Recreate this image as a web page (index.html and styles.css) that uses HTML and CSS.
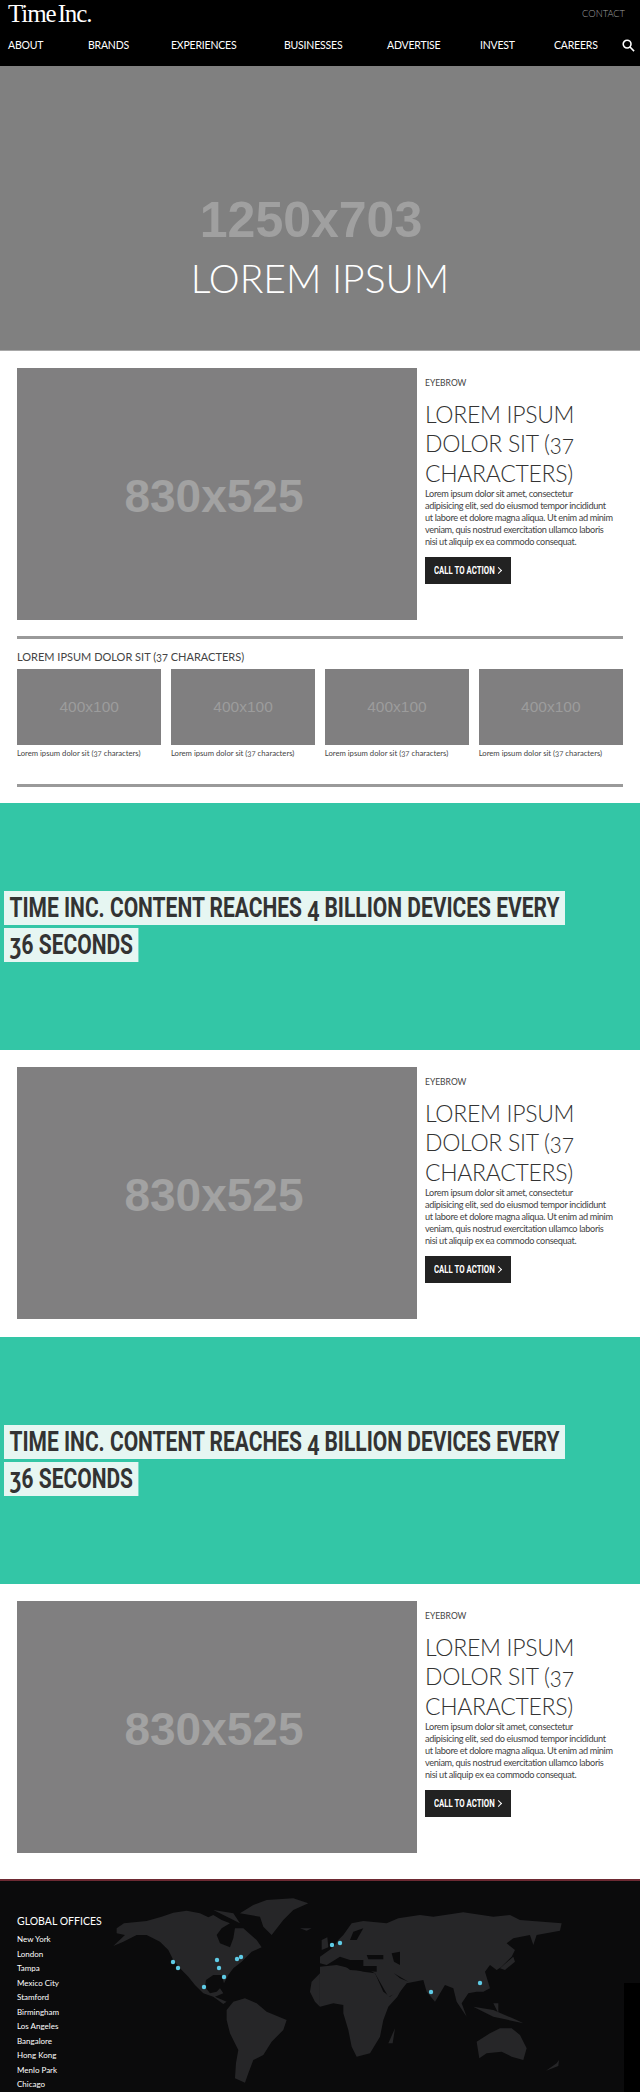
FILE: index.html
```html
<!DOCTYPE html>
<html lang="en">
<head>
    <meta charset="UTF-8">
    <meta name="viewport" content="width=device-width, initial-scale=1.0">
    <title>Time Inc.</title>
    <link rel="stylesheet" href="styles.css">
</head>
<body>
    <header class="site-header">
        <div class="top-bar">
            <a class="logo">Time Inc.</a>
            <a class="contact">CONTACT</a>
        </div>
        <nav class="main-nav">
            <a>ABOUT</a>
            <a>BRANDS</a>
            <a>EXPERIENCES</a>
            <a>BUSINESSES</a>
            <a>ADVERTISE</a>
            <a>INVEST</a>
            <a>CAREERS</a>
            <svg class="search-icon" viewBox="0 0 14 14">
                <circle cx="5.5" cy="5.5" r="4.2"/>
                <path d="M8.6 8.6 L13 13"/>
            </svg>
        </nav>
    </header>

    <section class="hero">
        <div class="hero-size">1250x703</div>
        <h1 class="hero-title">LOREM IPSUM</h1>
    </section>

    <section class="block">
        <div class="feature">
            <div class="placeholder feature-image">830x525</div>
            <div class="feature-copy">
                <div class="eyebrow">EYEBROW</div>
                <h2>LOREM IPSUM DOLOR SIT (37 CHARACTERS)</h2>
                <p>Lorem ipsum dolor sit amet, consectetur<br>adipisicing elit, sed do eiusmod tempor incididunt<br>ut labore et dolore magna aliqua. Ut enim ad minim<br>veniam, quis nostrud exercitation ullamco laboris<br>nisi ut aliquip ex ea commodo consequat.</p>
                <a class="cta"><span class="cta-label">CALL TO ACTION</span><span class="chevron"></span></a>
            </div>
        </div>
        <div class="rule-block">
            <h3>LOREM IPSUM DOLOR SIT (37 CHARACTERS)</h3>
            <div class="thumbs">
                <div class="thumb"><div class="placeholder thumb-image">400x100</div><span>Lorem ipsum dolor sit (37 characters)</span></div>
                <div class="thumb"><div class="placeholder thumb-image">400x100</div><span>Lorem ipsum dolor sit (37 characters)</span></div>
                <div class="thumb"><div class="placeholder thumb-image">400x100</div><span>Lorem ipsum dolor sit (37 characters)</span></div>
                <div class="thumb"><div class="placeholder thumb-image">400x100</div><span>Lorem ipsum dolor sit (37 characters)</span></div>
            </div>
        </div>
        <div class="rule-end"></div>
    </section>

    <section class="stat">
        <div class="stat-line">TIME INC. CONTENT REACHES 4 BILLION DEVICES EVERY</div>
        <div class="stat-line">36 SECONDS</div>
    </section>

    <section class="block">
        <div class="feature">
            <div class="placeholder feature-image">830x525</div>
            <div class="feature-copy">
                <div class="eyebrow">EYEBROW</div>
                <h2>LOREM IPSUM DOLOR SIT (37 CHARACTERS)</h2>
                <p>Lorem ipsum dolor sit amet, consectetur<br>adipisicing elit, sed do eiusmod tempor incididunt<br>ut labore et dolore magna aliqua. Ut enim ad minim<br>veniam, quis nostrud exercitation ullamco laboris<br>nisi ut aliquip ex ea commodo consequat.</p>
                <a class="cta"><span class="cta-label">CALL TO ACTION</span><span class="chevron"></span></a>
            </div>
        </div>
    </section>

    <section class="stat">
        <div class="stat-line">TIME INC. CONTENT REACHES 4 BILLION DEVICES EVERY</div>
        <div class="stat-line">36 SECONDS</div>
    </section>

    <section class="block block-last">
        <div class="feature">
            <div class="placeholder feature-image">830x525</div>
            <div class="feature-copy">
                <div class="eyebrow">EYEBROW</div>
                <h2>LOREM IPSUM DOLOR SIT (37 CHARACTERS)</h2>
                <p>Lorem ipsum dolor sit amet, consectetur<br>adipisicing elit, sed do eiusmod tempor incididunt<br>ut labore et dolore magna aliqua. Ut enim ad minim<br>veniam, quis nostrud exercitation ullamco laboris<br>nisi ut aliquip ex ea commodo consequat.</p>
                <a class="cta"><span class="cta-label">CALL TO ACTION</span><span class="chevron"></span></a>
            </div>
        </div>
    </section>

    <footer class="offices">
        <svg class="world-map" viewBox="0 1881 640 211">
            <g class="land" transform="translate(0 1860) scale(0.3333)">
                <!-- north america -->
                <path d="M350 205 L372 190 L440 183 L485 170 L520 158 L560 152 L600 160 L625 172 L640 165 L665 180 L690 190 L665 205 L650 225 L660 250 L690 262 L700 235 L705 205 L730 205 L770 240 L785 262 L755 275 L740 290 L725 305 L700 325 L685 345 L672 370 L665 345 L640 345 L618 360 L615 380 L630 400 L650 395 L660 385 L670 400 L645 410 L680 425 L670 432 L640 410 L610 400 L585 375 L565 350 L540 325 L520 300 L505 270 L480 245 L440 225 L410 225 L370 245 L340 258 L375 225 L350 220 Z"/>
                <path d="M640 150 L700 160 L720 190 L690 175 Z"/>
                <!-- greenland -->
                <path d="M720 160 L760 135 L800 120 L880 115 L925 130 L880 150 L850 180 L815 225 L790 200 L780 170 Z"/>
                <path d="M900 205 L935 205 L920 212 Z"/>
                <!-- south america -->
                <path d="M680 450 L700 425 L735 415 L770 430 L800 455 L860 480 L850 510 L815 545 L790 585 L760 600 L745 640 L735 668 L705 655 L708 610 L715 570 L690 520 L680 480 Z"/>
                <!-- west africa -->
                <path d="M960 340 L935 365 L930 395 L945 425 L960 440 Z"/>
            </g>
            <g class="land" transform="translate(320 1860) scale(0.3333)">
                <!-- africa -->
                <path d="M0 320 L50 315 L90 325 L130 335 L165 340 L190 395 L210 410 L250 378 L232 410 L205 440 L190 480 L180 530 L150 580 L110 590 L95 560 L85 510 L70 460 L70 435 L40 430 L0 440 Z"/>
                <!-- eurasia -->
                <path d="M0 290 L40 262 L55 240 L70 225 L95 190 L130 183 L200 190 L235 175 L300 165 L340 170 L430 157 L520 170 L570 165 L600 180 L725 190 L720 212 L650 225 L640 255 L630 225 L580 235 L560 250 L585 270 L575 290 L545 320 L530 330 L510 315 L495 335 L510 385 L490 395 L470 395 L445 400 L425 430 L440 470 L410 425 L400 385 L375 375 L345 425 L320 395 L310 360 L260 370 L240 395 L205 410 L165 340 L130 320 L130 300 L90 300 L60 290 L20 315 L0 310 Z"/>
                <path d="M5 240 L22 232 L25 262 L5 270 Z"/>
                <!-- japan, islands -->
                <path d="M540 325 L580 290 L585 305 L555 330 Z"/>
                <path d="M460 440 L520 470 L610 490 L590 480 L520 450 Z"/>
                <path d="M520 430 L535 430 L535 460 Z"/>
                <!-- australia -->
                <path d="M470 545 L510 520 L540 505 L575 505 L600 525 L620 565 L610 600 L575 590 L545 575 L500 580 L478 595 Z"/>
                <path d="M205 550 L225 505 L218 550 Z"/>
                <path d="M678 632 L710 610 L717 600 L715 618 Z"/>
            </g>
            <g class="water" transform="translate(320 1860) scale(0.3333)">
                <path d="M140 285 L190 285 L190 298 L145 298 Z"/>
                <path d="M215 280 L240 275 L240 315 L222 305 Z"/>
                <path d="M100 215 L130 205 L110 240 L90 240 Z"/>
                <path d="M222 340 L265 365 L240 355 Z"/>
                <path d="M75 318 L170 318 L170 335 L90 330 Z"/>
            </g>
            <g class="pins">
                <circle cx="173" cy="1962" r="2.2"/>
                <circle cx="178" cy="1968" r="2.2"/>
                <circle cx="204" cy="1987" r="2.2"/>
                <circle cx="217" cy="1960" r="2.2"/>
                <circle cx="219" cy="1968" r="2.2"/>
                <circle cx="224" cy="1977" r="2.2"/>
                <circle cx="237" cy="1959" r="2.2"/>
                <circle cx="241" cy="1957" r="2.2"/>
                <circle cx="332" cy="1945" r="2.2"/>
                <circle cx="340" cy="1943" r="2.2"/>
                <circle cx="431" cy="1992" r="2.2"/>
                <circle cx="480" cy="1983" r="2.2"/>
            </g>
        </svg>
        <div class="corner-box"></div>
        <h4>GLOBAL OFFICES</h4>
        <ul>
            <li>New York</li>
            <li>London</li>
            <li>Tampa</li>
            <li>Mexico City</li>
            <li>Stamford</li>
            <li>Birmingham</li>
            <li>Los Angeles</li>
            <li>Bangalore</li>
            <li>Hong Kong</li>
            <li>Menlo Park</li>
            <li>Chicago</li>
        </ul>
    </footer>
</body>
</html>
```

FILE: styles.css
```css
* {
    box-sizing: border-box;
}
html, body {
    height: 2092px;
    overflow: hidden;
}
body {
    margin: 0;
    font-family: Lato, 'Open Sans', sans-serif;
    font-variant-numeric: oldstyle-nums;
    background-color: white;
    color: #444;
}

/* header */
.site-header {
    height: 66px;
    background-color: black;
    color: white;
}
.top-bar {
    height: 33px;
    display: flex;
    justify-content: space-between;
    padding: 0 15px 0 8px;
}
.logo {
    font-family: 'Liberation Serif', serif;
    font-size: 25px;
    letter-spacing: -1.1px;
    word-spacing: -3px;
    line-height: 27px;
}
.contact {
    font-size: 9.3px;
    font-weight: 300;
    color: #a0a0a0;
    line-height: 27px;
}
.main-nav {
    display: grid;
    grid-template-columns: 80px 83px 113px 103px 93px 74px 67px 13px;
    align-items: center;
    padding: 0 0 0 8px;
    height: 24px;
    font-size: 10.5px;
    letter-spacing: -0.2px;
}
.search-icon {
    width: 13px;
    height: 13px;
    margin-left: 1px;
    fill: none;
    stroke: white;
    stroke-width: 1.7;
}

/* hero */
.hero {
    height: 285px;
    background-color: #808080;
    border-bottom: 1px solid #a8a8a8;
    text-align: center;
    padding-top: 129px;
}
.hero-size {
    font-family: 'Liberation Sans', sans-serif;
    font-weight: bold;
    font-size: 50px;
    line-height: 50px;
    color: #a0a0a0;
    padding-right: 18px;
}
.hero-title {
    margin: 8px 0 0 0;
    font-size: 39px;
    font-weight: 300;
    line-height: 50px;
    color: white;
}

/* feature rows */
.block {
    padding: 17px 17px 2px 17px;
}
.block-last {
    height: 295px;
}
.feature {
    display: flex;
    gap: 8px;
    height: 252px;
    margin-bottom: 16px;
}
.placeholder {
    display: flex;
    align-items: center;
    justify-content: center;
    background-color: #807f80;
    color: #a2a2a2;
    font-family: 'Liberation Sans', sans-serif;
    font-variant-numeric: normal;
}
.feature-image {
    flex: none;
    width: 400px;
    font-size: 46px;
    font-weight: bold;
    padding: 3px 6px 0 0;
}
.feature-copy {
    flex: 1;
    padding-top: 9px;
}
.eyebrow {
    font-size: 8.5px;
    line-height: 12px;
}
h2 {
    margin: 11px 0 0 0;
    font-size: 23px;
    font-weight: 300;
    letter-spacing: -0.3px;
    line-height: 29.3px;
    color: #333;
}
.feature-copy p {
    margin: 0;
    font-size: 9.2px;
    letter-spacing: -0.35px;
    line-height: 12px;
    white-space: nowrap;
}
.cta {
    display: flex;
    align-items: center;
    height: 27px;
    width: 86px;
    margin-top: 9px;
    padding-left: 9px;
    background-color: #222;
    color: white;
}
.cta-label {
    flex: none;
    width: 62px;
    font-family: Roboto, 'Liberation Sans', sans-serif;
    font-size: 10px;
    font-weight: bold;
    white-space: nowrap;
    transform: scaleX(0.78);
    transform-origin: left;
}
.chevron {
    width: 5px;
    height: 5px;
    border-top: 1px solid white;
    border-right: 1px solid white;
    transform: rotate(45deg);
}

/* thumbnails */
.rule-block {
    border-top: 3px solid #9a9a9a;
}
h3 {
    margin: 11px 0 5px 0;
    font-size: 11px;
    font-weight: 400;
    line-height: 14px;
}
.thumbs {
    display: grid;
    grid-template-columns: repeat(4, 1fr);
    gap: 9.5px;
}
.thumb-image {
    height: 76px;
    font-size: 15.5px;
    color: #9c9c9c;
    margin-bottom: 2px;
}
.thumb span {
    font-size: 7.7px;
    line-height: 12px;
    display: block;
}
.rule-end {
    border-top: 3px solid #9a9a9a;
    margin: 25px 0 0 0;
    height: 17px;
}

/* teal banner */
.stat {
    height: 247px;
    background-color: #33c6a6;
    display: flex;
    flex-direction: column;
    justify-content: center;
    align-items: flex-start;
    gap: 3px;
    padding-left: 4px;
}
.stat-line {
    flex: none;
    height: 34px;
    padding: 0 7px;
    background-color: #e6f6f2;
    color: #333;
    font-family: Roboto, 'Liberation Sans', sans-serif;
    font-size: 27px;
    font-weight: bold;
    line-height: 34px;
    white-space: nowrap;
    transform: scaleX(0.777);
    transform-origin: left;
}

/* footer */
.offices {
    position: relative;
    height: 213px;
    background-color: #0b0b0c;
    border-top: 2px solid #6d2a33;
    padding: 33px 17px 0 17px;
    color: white;
    overflow: hidden;
}
.world-map {
    position: absolute;
    left: 0;
    top: 0;
    width: 640px;
    height: 211px;
}
.land {
    fill: #262628;
}
.water {
    fill: #0b0b0c;
}
.pins {
    fill: #5fcbe6;
}
.corner-box {
    position: absolute;
    right: 0;
    bottom: 0;
    width: 16px;
    height: 109px;
    background-color: black;
}
.offices h4 {
    position: relative;
    margin: 0 0 3px 0;
    font-size: 10.5px;
    font-weight: 400;
    line-height: 15px;
}
.offices ul {
    position: relative;
    list-style: none;
    margin: 0;
    padding: 0;
    font-size: 8px;
    line-height: 14.5px;
}
```
